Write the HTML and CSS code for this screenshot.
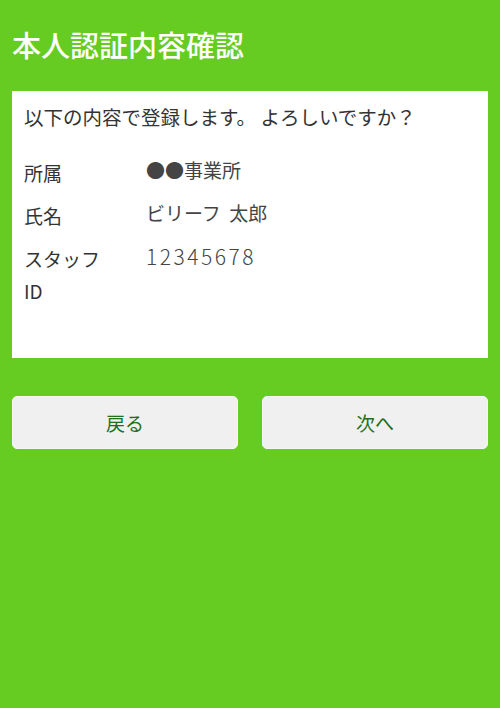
FILE: index.html
```html
<!DOCTYPE html>
<html lang="ja">
<head>
<meta charset="utf-8">
<link rel="stylesheet" href="styles.css">
</head>
<body>
<div class="page">
  <h1 class="title">本人認証内容確認</h1>
  <div class="card">
    <p class="message">以下の内容で登録します。 よろしいですか？</p>
    <div class="row">
      <div class="label">所属</div>
      <div class="value">●●事業所</div>
    </div>
    <div class="row">
      <div class="label">氏名</div>
      <div class="value">ビリーフ&nbsp;&nbsp;太郎</div>
    </div>
    <div class="row">
      <div class="label">スタッフ ID</div>
      <div class="value num">12345678</div>
    </div>
  </div>
  <div class="actions">
    <button class="btn">戻る</button>
    <button class="btn">次へ</button>
  </div>
</div>
</body>
</html>
```
FILE: styles.css
```css
html, body {
  margin: 0;
  padding: 0;
  background: #66cc22;
}
body {
  font-family: "Noto Sans CJK JP", "Noto Sans", sans-serif;
  width: 500px;
  height: 708px;
}
.page {
  padding: 0 12px;
}
.title {
  margin: 0;
  padding: 26px 0 0;
  height: 91px;
  box-sizing: border-box;
  font-size: 29px;
  line-height: 36px;
  font-weight: 500;
  color: #ffffff;
}
.card {
  background: #ffffff;
  height: 267px;
  box-sizing: border-box;
  padding: 10px 12px 0;
}
.message {
  margin: 0 0 24px;
  font-size: 19.5px;
  line-height: 32px;
  color: #333333;
}
.row {
  display: flex;
  margin-bottom: 11px;
  font-size: 19px;
  line-height: 32px;
}
.label {
  width: 84px;
  margin-right: 38px;
  color: #333333;
}
.value {
  color: #444444;
  margin-top: -3px;
}
.num {
  font-size: 21px;
  letter-spacing: 2.5px;
  font-weight: 300;
}
.actions {
  display: flex;
  gap: 24px;
  margin-top: 38px;
}
.btn {
  flex: 1;
  height: 53px;
  border: 1px solid #f6f6f6;
  border-radius: 5px;
  background: #f0f0f0;
  color: #1f6f1f;
  font-family: "Noto Sans CJK JP", "Noto Sans", sans-serif;
  font-size: 19px;
  padding: 0;
}
```
